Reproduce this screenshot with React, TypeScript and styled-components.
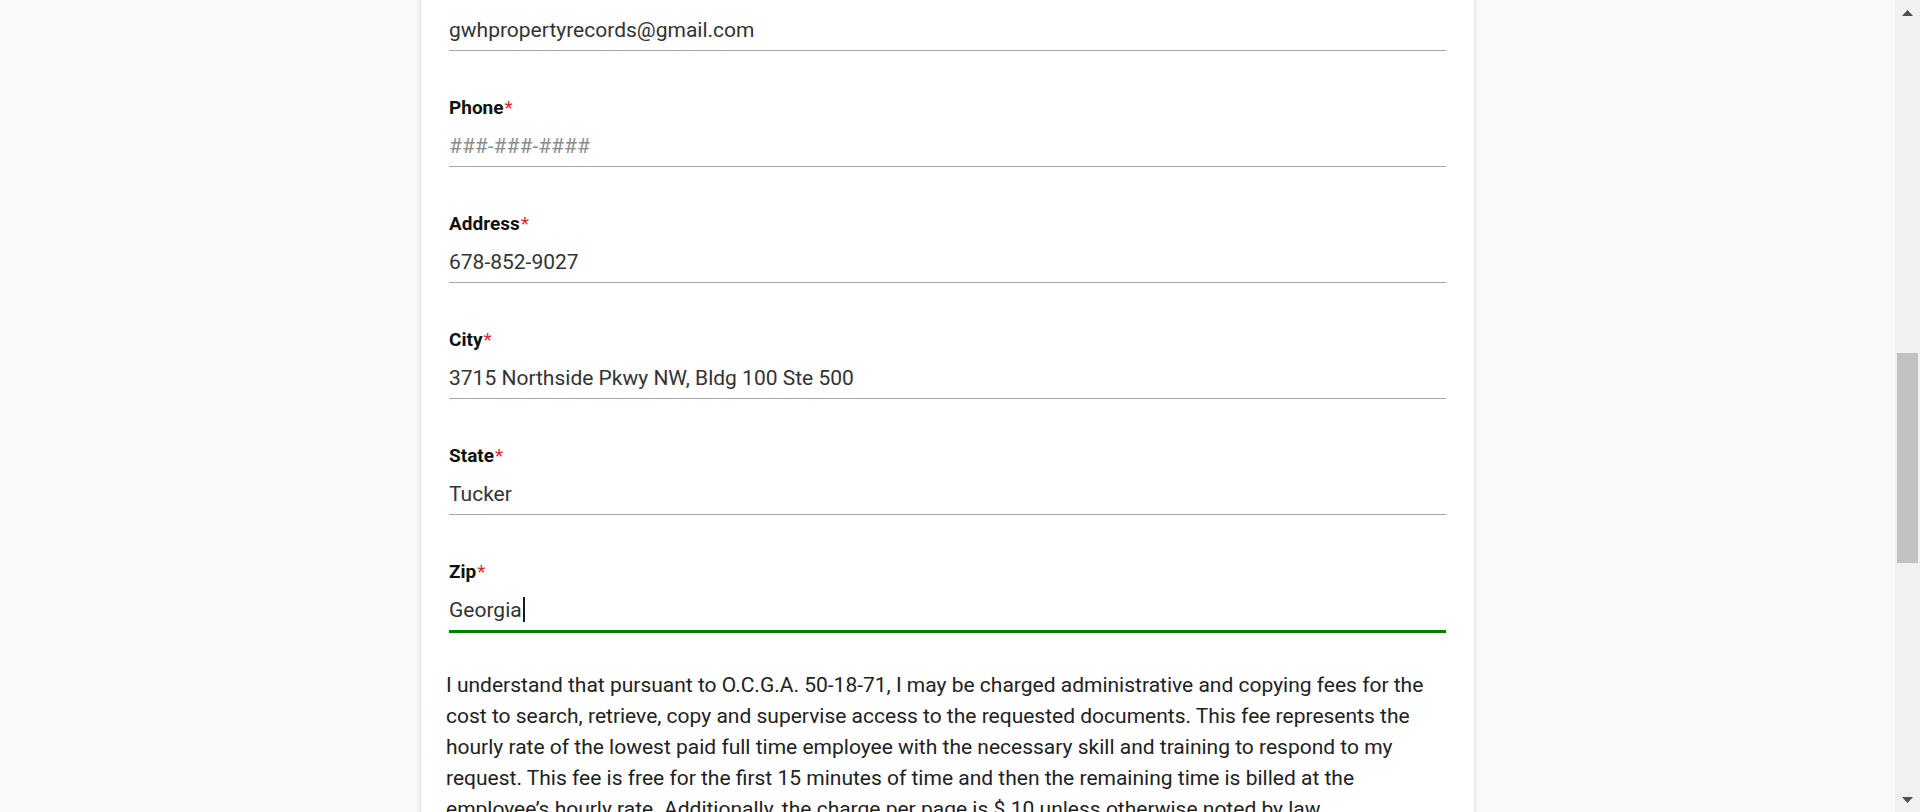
import React from "react";
import styled, { createGlobalStyle } from "styled-components";

const GlobalStyle = createGlobalStyle`
  html, body {
    margin: 0;
    padding: 0;
    height: 812px;
    overflow: hidden;
    background: #f9f9f9;
    font-family: Roboto, "Noto Sans", "Liberation Sans", sans-serif;
  }
  #root { height: 812px; }
`;

const Page = styled.div`
  display: flex;
  height: 812px;
  overflow: hidden;
`;

const Main = styled.main`
  flex: 1;
  display: flex;
  justify-content: center;
  align-items: flex-start;
  background: #f9f9f9;
  overflow: hidden;
`;

const Card = styled.section`
  width: 1053px;
  box-sizing: border-box;
  margin-top: -21px;
  min-height: 900px;
  padding: 0 25px;
  background: #ffffff;
  box-shadow: 0 0 5px rgba(0, 0, 0, 0.16);
`;

const Fields = styled.div`
  display: flex;
  flex-direction: column;
  gap: 44px;
  padding: 0 3px;
`;

const Field = styled.div`
  display: flex;
  flex-direction: column;
  gap: 4px;
`;

const Label = styled.label`
  font-size: 19px;
  line-height: 26px;
  font-weight: 700;
  color: #111;
`;

const Star = styled.span`
  color: #e0282e;
  font-weight: 400;
  margin-left: 1px;
`;

const Input = styled.input`
  display: block;
  box-sizing: border-box;
  width: 100%;
  height: 42px;
  margin: 0;
  padding: 0;
  border: none;
  border-bottom: 1px solid #a8a8a8;
  outline: none;
  background: transparent;
  font-family: Roboto, "Noto Sans", sans-serif;
  font-size: 21px;
  color: #333;
  &::placeholder {
    color: #8c8c8c;
  }
`;

const FocusedBox = styled.div`
  display: flex;
  align-items: center;
  box-sizing: border-box;
  width: 100%;
  height: 44px;
  border-bottom: 3px solid #008000;
  font-size: 21px;
  color: #333;
`;

const Caret = styled.span`
  display: inline-block;
  width: 2px;
  height: 25px;
  margin-left: 1px;
  background: #1a1a1a;
`;

const Notice = styled.p`
  margin: 37px 0 0;
  font-size: 21px;
  line-height: 31px;
  color: #222;
`;

const Scrollbar = styled.div`
  width: 25px;
  flex-shrink: 0;
  display: flex;
  flex-direction: column;
  background: #f1f1f1;
`;

const ArrowButton = styled.div`
  height: 25px;
  display: flex;
  align-items: center;
  justify-content: center;
`;

const Track = styled.div`
  flex: 1;
  padding: 328px 2px 0;
`;

const Thumb = styled.div`
  height: 210px;
  background: #c1c1c1;
`;

type FieldDef = { label: string; value?: string; placeholder?: string; focused?: boolean };

const fields: FieldDef[] = [
  { label: "Email", value: "gwhpropertyrecords@gmail.com" },
  { label: "Phone", placeholder: "###-###-####" },
  { label: "Address", value: "678-852-9027" },
  { label: "City", value: "3715 Northside Pkwy NW, Bldg 100 Ste 500" },
  { label: "State", value: "Tucker" },
  { label: "Zip", value: "Georgia", focused: true },
];

export default function App() {
  return (
    <>
      <GlobalStyle />
      <Page>
        <Main>
          <Card>
            <Fields>
              {fields.map((f) => (
                <Field key={f.label}>
                  <Label>
                    {f.label}
                    <Star>*</Star>
                  </Label>
                  {f.focused ? (
                    <FocusedBox>
                      {f.value}
                      <Caret />
                    </FocusedBox>
                  ) : (
                    <Input readOnly value={f.value ?? ""} placeholder={f.placeholder} />
                  )}
                </Field>
              ))}
            </Fields>
            <Notice>
              I understand that pursuant to O.C.G.A. 50-18-71, I may be charged administrative and
              copying fees for the cost to search, retrieve, copy and supervise access to the
              requested documents. This fee represents the hourly rate of the lowest paid full time
              employee with the necessary skill and training to respond to my request. This fee is
              free for the first 15 minutes of time and then the remaining time is billed at the
              employee’s hourly rate. Additionally, the charge per page is $.10 unless otherwise
              noted by law.
            </Notice>
          </Card>
        </Main>
        <Scrollbar>
          <ArrowButton>
            <svg width="11" height="6" viewBox="0 0 11 6">
              <path d="M0 6 L5.5 0 L11 6 Z" fill="#505050" />
            </svg>
          </ArrowButton>
          <Track>
            <Thumb />
          </Track>
          <ArrowButton>
            <svg width="11" height="6" viewBox="0 0 11 6">
              <path d="M0 0 L5.5 6 L11 0 Z" fill="#505050" />
            </svg>
          </ArrowButton>
        </Scrollbar>
      </Page>
    </>
  );
}
